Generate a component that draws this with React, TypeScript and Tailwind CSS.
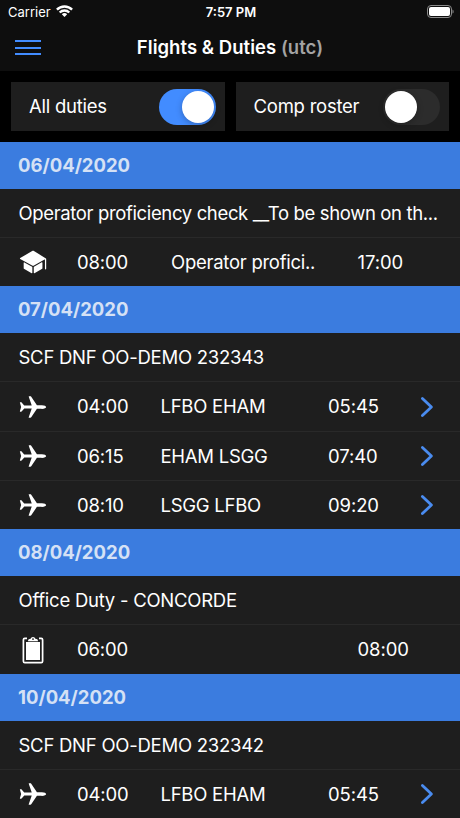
import { useState } from 'react';
import { IoIosAirplane, IoIosSchool } from 'react-icons/io';

type DutyKind = 'flight' | 'school' | 'office';

interface Duty {
  kind: DutyKind;
  start: string;
  label: string;
  end: string;
}

interface RosterDay {
  date: string;
  title: string;
  duties: Duty[];
}

const ROSTER: RosterDay[] = [
  {
    date: '06/04/2020',
    title: 'Operator proficiency check __To be shown on th...',
    duties: [{ kind: 'school', start: '08:00', label: 'Operator profici..', end: '17:00' }],
  },
  {
    date: '07/04/2020',
    title: 'SCF DNF OO-DEMO 232343',
    duties: [
      { kind: 'flight', start: '04:00', label: 'LFBO EHAM', end: '05:45' },
      { kind: 'flight', start: '06:15', label: 'EHAM LSGG', end: '07:40' },
      { kind: 'flight', start: '08:10', label: 'LSGG LFBO', end: '09:20' },
    ],
  },
  {
    date: '08/04/2020',
    title: 'Office Duty - CONCORDE',
    duties: [{ kind: 'office', start: '06:00', label: '', end: '08:00' }],
  },
  {
    date: '10/04/2020',
    title: 'SCF DNF OO-DEMO 232342',
    duties: [{ kind: 'flight', start: '04:00', label: 'LFBO EHAM', end: '05:45' }],
  },
];

function ClipboardIcon({ className }: { className?: string }) {
  return (
    <svg viewBox="0 0 30 30" className={className} fill="none">
      <rect x="5.4" y="3.4" width="19.2" height="24.2" rx="1.4" stroke="#fff" strokeWidth="1.7" />
      <rect x="8" y="7" width="14" height="18" fill="#fff" />
      <path d="M9 2h12v4.6H9z" fill="#1e1e1e" />
      <path d="M10 6.2c0-1.8 1.2-2.2 2.6-2.4a2.5 2.5 0 0 1 4.8 0c1.4.2 2.6.6 2.6 2.4z" fill="#fff" />
      <circle cx="15" cy="4.1" r="0.9" fill="#1e1e1e" />
    </svg>
  );
}

const ICONS = {
  flight: IoIosAirplane,
  school: IoIosSchool,
  office: ClipboardIcon,
};

function StatusBar() {
  return (
    <div className="grid h-6 grid-cols-[1fr_auto_1fr] items-center pl-2 pr-[6px] text-[13px] leading-none">
      <div className="flex items-center gap-[5px]">
        <span>Carrier</span>
        <svg viewBox="0 0 17 12" className="-mt-0.5 h-3 w-[17px]" fill="none" stroke="#fff" strokeWidth="2.4">
          <path d="M0.9 4.6a10.7 10.7 0 0 1 15.2 0" />
          <path d="M3.7 7.5a6.8 6.8 0 0 1 9.6 0" />
          <path d="M8.5 12 5.8 9.3a3.9 3.9 0 0 1 5.4 0z" fill="#fff" stroke="none" />
        </svg>
      </div>
      <span className="font-semibold">7:57 PM</span>
      <svg viewBox="0 0 27 13" className="-mt-px h-[13px] w-[27px] justify-self-end">
        <rect x="0.5" y="0.5" width="24" height="12" rx="3.5" fill="none" stroke="#8a8a8a" />
        <rect x="2" y="2" width="21" height="9" rx="2" fill="#fff" />
        <path d="M25.5 4.4c1.5.6 1.5 3.6 0 4.2z" fill="#8a8a8a" />
      </svg>
    </div>
  );
}

function Toggle({ label, on, onChange }: { label: string; on: boolean; onChange: () => void }) {
  return (
    <button
      onClick={onChange}
      className="flex h-[49px] flex-1 items-center justify-between bg-[#1e1e1e] pl-[18px] pr-[9px]"
    >
      <span className="pt-px text-[18.5px] tracking-[-0.24px]">{label}</span>
      <span
        className={`flex h-9 w-[57px] items-center rounded-full p-[2px] ${
          on ? 'justify-end bg-[#428cff]' : 'justify-start bg-[#2c2c2c]'
        }`}
      >
        <span className="h-8 w-8 rounded-full bg-white shadow-[0_2px_6px_rgba(0,0,0,0.25)]" />
      </span>
    </button>
  );
}

function DutyRow({ duty }: { duty: Duty }) {
  const Icon = ICONS[duty.kind];
  const isFlight = duty.kind === 'flight';

  return (
    <div className="flex h-[49.3px] items-center border-t border-[#292929] pl-[18px] pr-[26px]">
      <Icon className="h-[30px] w-[30px] shrink-0" />
      <span className="ml-[29px] w-[83.5px] pt-px tracking-[-0.15px]">{duty.start}</span>
      <span className={`pt-px tracking-[-0.26px] ${isFlight ? 'w-[167.5px]' : 'w-[197px] pl-[10.5px]'}`}>
        {duty.label}
      </span>
      <span className="pt-px tracking-[-0.1px]">{duty.end}</span>
      {isFlight && (
        <svg
          viewBox="0 0 14 22"
          className="ml-auto h-[22px] w-[14px]"
          fill="none"
          stroke="#4a8cf0"
          strokeWidth="2.8"
          strokeLinecap="round"
          strokeLinejoin="round"
        >
          <path d="M2.4 2.4 11.4 11l-9 8.6" />
        </svg>
      )}
    </div>
  );
}

export default function App() {
  const [allDuties, setAllDuties] = useState(true);
  const [compRoster, setCompRoster] = useState(false);

  return (
    <div className="h-[818px] w-[460px] overflow-hidden bg-black font-['Inter',sans-serif] text-white">
      <header className="h-[71px] bg-[#0e0e0e]">
        <StatusBar />
        <div className="grid h-[47px] grid-cols-[1fr_auto_1fr] items-center">
          <button className="ml-[15px] flex w-[26px] flex-col gap-[4.5px]">
            <span className="h-[2px] bg-[#428cff]" />
            <span className="h-[2px] bg-[#428cff]" />
            <span className="h-[2px] bg-[#428cff]" />
          </button>
          <h1 className="text-[18.5px] font-semibold tracking-[0.04px]">
            Flights &amp; Duties <span className="text-[#a3a3a3]">(utc)</span>
          </h1>
        </div>
      </header>

      <div className="flex h-[71px] gap-[11px] px-[11px] pt-[11px]">
        <Toggle label="All duties" on={allDuties} onChange={() => setAllDuties(!allDuties)} />
        <Toggle label="Comp roster" on={compRoster} onChange={() => setCompRoster(!compRoster)} />
      </div>

      <main className="bg-[#1e1e1e] text-[18.5px]">
        {ROSTER.map((day) => (
          <section key={day.date}>
            <h2 className="flex h-[46.9px] items-center bg-[#3b7cdf] pl-[18px] pt-px font-bold text-[#d5e1f5]">
              {day.date}
            </h2>
            <p
              className={`h-[48.2px] whitespace-nowrap pl-[18.5px] leading-[48.2px] ${
                day.title.length > 40 ? 'tracking-[-0.36px]' : 'tracking-[-0.25px]'
              }`}
            >
              {day.title}
            </p>
            {day.duties.map((duty) => (
              <DutyRow key={duty.start} duty={duty} />
            ))}
          </section>
        ))}
      </main>
    </div>
  );
}
